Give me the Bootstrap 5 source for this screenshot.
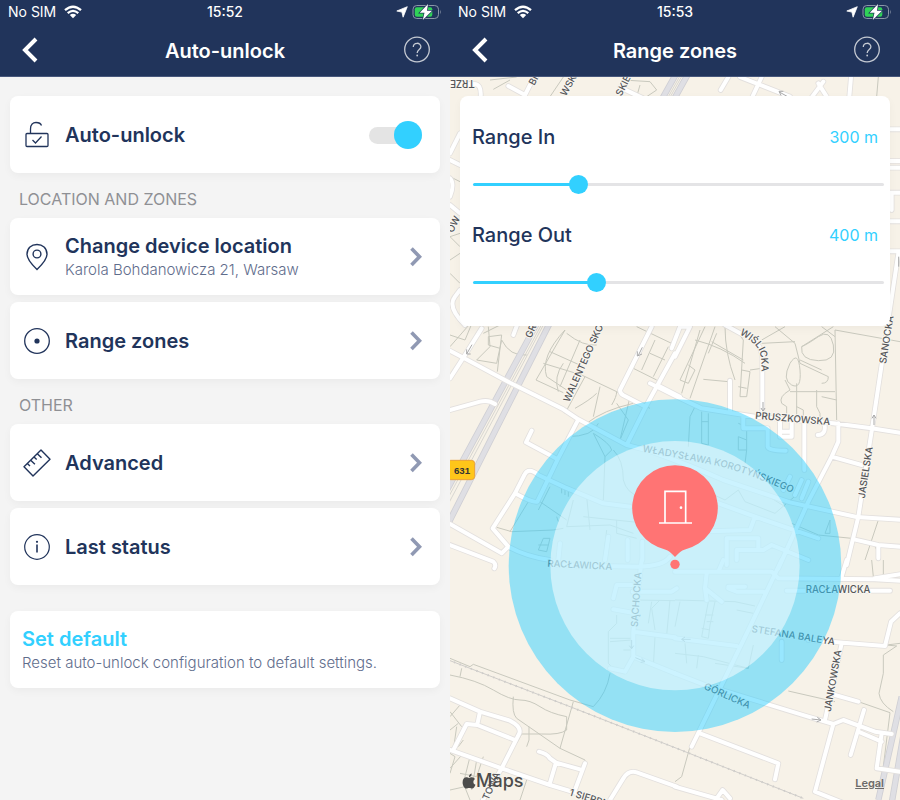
<!DOCTYPE html>
<html lang="en">
<head>
<meta charset="utf-8">
<meta name="viewport" content="width=device-width, initial-scale=1">
<title>Auto-unlock</title>
<link href="https://cdn.jsdelivr.net/npm/bootstrap@5.3.0/dist/css/bootstrap.min.css" rel="stylesheet">
<style>
  :root { --navy: #21345b; --sky: #32d0ff; }
  body { font-family: Inter, "Liberation Sans", sans-serif; background: #f4f4f4; color: var(--navy); }
  .app-bar { background: var(--navy); border-bottom: 1px solid #47577c; }
  .status { height: 24px; font-size: 14px; line-height: 24px; padding: 0 8px; }
  .status > * { flex: 1 1 0; }
  .status time { font-weight: 500; }
  .title-bar { height: 52px; padding: 0 19px; }
  .title-bar h1 { font-size: 20px; line-height: 24px; font-weight: 600; padding-top: 1px; }
  .bar-btn { width: 28px; line-height: 0; }
  .panel { border: 0; border-radius: 8px; box-shadow: 0 3px 8px rgba(0, 0, 0, .04); color: var(--navy); }
  .screen { padding: 19px 10px; }
  .setting { min-height: 77px; gap: 14px; padding: 0 18px 0 13px; }
  .setting-name { font-size: 20px; line-height: 24px; font-weight: 600; }
  .setting-note { font-size: 15px; line-height: 24px; font-weight: 300; color: #5f6d8c; }
  .two-line { padding-top: 3px; }
  .group-name { height: 45px; font-size: 16px; line-height: 53px; font-weight: 400; color: #8f9094; padding-left: 9px; }
  .stack { gap: 7px; }
  .reset { margin-top: 26px; min-height: 77px; padding: 3px 12px 0; }
  .reset .setting-name { color: var(--sky); }
  .toggle { appearance: none; width: 53px; height: 28px; position: relative; }
  .toggle::before { content: ""; position: absolute; inset: 6px 0 5px; border-radius: 9px; background: #e4e4e4; }
  .toggle::after { content: ""; position: absolute; left: 0; top: 0; width: 28px; height: 28px; border-radius: 50%; background: #bbb; }
  .toggle:checked::after { left: auto; right: 0; background: var(--sky); }
  .map-screen { background: #f7f2e8; }
  .city-map { position: absolute; inset: 0; width: 100%; height: 100%; }
  .ranges { min-height: 230px; padding: 27px 6px 0 12px; }
  .range-name { font-size: 20px; line-height: 28px; font-weight: 500; }
  .range-value { font-size: 16px; line-height: 28px; color: var(--sky); padding-right: 6px; }
  .slider { appearance: none; display: block; width: 100%; height: 20px; margin: 23px 0 27px; padding: 0 0 0 1px; background: none; }
  .slider::-webkit-slider-runnable-track { height: 3px; border-radius: 2px; background: linear-gradient(to right, var(--sky) var(--fill), #e4e4e6 var(--fill)); }
  .slider::-webkit-slider-thumb { appearance: none; width: 19px; height: 19px; margin-top: -8px; border-radius: 50%; background: var(--sky); }
  .maps-brand { font-size: 18px; line-height: 24px; font-weight: 500; color: #4c4c4b; }
  .legal { font-size: 11px; line-height: 16px; font-weight: 600; color: #6d6c6a; padding-top: 4px; }
  .map-foot { padding: 0 16px 7px 12px; }
</style>
<script src="https://cdn.jsdelivr.net/npm/bootstrap@5.3.0/dist/js/bootstrap.bundle.min.js"></script>
</head>
<body>
<svg class="d-none" aria-hidden="true">
  <symbol id="wifi" viewBox="0 0 18 14"><g fill="none" stroke="#fff" stroke-width="2.3"><path d="M1 5.2Q9-1.8 17 5.2M3.7 8.2Q9 3.6 14.3 8.2"/></g><path d="M5.8 10Q9 7.4 12.2 10L9 13.3z" fill="#fff"/></symbol>
  <symbol id="arrow" viewBox="0 0 12 12"><path d="M11.3.7 7.1 11.2 5.9 6.1.8 5z" fill="#fff" stroke="#fff" stroke-width=".8" stroke-linejoin="round"/></symbol>
  <symbol id="battery" viewBox="0 0 30 16"><rect x="1" y="1.5" width="25.5" height="13" rx="3.8" fill="none" stroke="#8c95a9"/><path d="M28 5.5Q29.5 8 28 10.5z" fill="#8c95a9"/><rect x="2.8" y="3.3" width="17.5" height="9.4" rx="2" fill="#30d158"/><path d="M16 0 7.7 8.8h4.8L10.8 16 20 6.8h-5z" fill="#fff" stroke="#21345b" stroke-width="1.4" paint-order="stroke"/></symbol>
  <symbol id="back" viewBox="0 0 28 28"><path d="M17 3 6 14 17 25" fill="none" stroke="#fff" stroke-width="4"/></symbol>
  <symbol id="help" viewBox="0 0 28 28"><circle cx="14" cy="13.500" r="12.300" fill="none" stroke="#c5cad3" stroke-width="1.300"/><path d="M10.300 11.100C10.300 6 17.900 6.100 17.900 10.800C17.900 13.700 14.200 13.500 14.200 17.100" fill="none" stroke="#c5cad3" stroke-width="1.300"/><circle cx="14.200" cy="19.500" r=".9" fill="#c5cad3"/></symbol>
  <symbol id="next" viewBox="0 0 12 20"><path d="M1.500 1.500 9.500 9.700 1.500 18" fill="none" stroke="#9099b3" stroke-width="3.600"/></symbol>
</svg>

<main class="row g-0 min-vh-100">
  <section class="col-6 d-flex flex-column">
    <header class="app-bar text-white">
      <div class="status d-flex align-items-center">
        <div class="d-flex align-items-center gap-2"><span>No SIM</span><svg width="18" height="14"><use href="#wifi"/></svg></div>
        <time class="text-center">15:52</time>
        <div class="d-flex justify-content-end align-items-center gap-1"><svg width="12" height="12"><use href="#arrow"/></svg><svg width="30" height="16"><use href="#battery"/></svg></div>
      </div>
      <nav class="title-bar d-flex justify-content-between align-items-center">
        <button class="bar-btn btn p-0 border-0" aria-label="Back"><svg width="28" height="28"><use href="#back"/></svg></button>
        <h1 class="mb-0">Auto-unlock</h1>
        <button class="bar-btn btn p-0 border-0" aria-label="Help"><svg width="28" height="28"><use href="#help"/></svg></button>
      </nav>
    </header>
    <div class="screen">
      <div class="panel card setting flex-row align-items-center">
        <svg width="28" height="28" fill="none" stroke="#21345b" stroke-width="1.300"><rect x="3" y="12.500" width="22" height="13" rx="1"/><path d="M7.500 12.500V8C7.500 3.500 10 1.500 13 1.500Q17.500 1.500 18.500 4.500M9.500 19 12.500 22 18.500 15.500"/></svg>
        <label class="setting-name flex-grow-1" for="auto">Auto-unlock</label>
        <input class="toggle" type="checkbox" role="switch" id="auto" checked>
      </div>
      <h2 class="group-name mb-0">LOCATION AND ZONES</h2>
      <div class="stack d-flex flex-column">
        <a href="#location" class="panel card setting flex-row align-items-center text-decoration-none">
          <svg width="28" height="28" fill="none" stroke="#21345b" stroke-width="1.400"><path d="M14 26.500Q4 17 4 11.300C4 5 8.500 1.500 14 1.500S24 5 24 11.300Q24 17 14 26.500z"/><circle cx="14" cy="11" r="3.900"/></svg>
          <span class="two-line flex-grow-1"><span class="setting-name d-block">Change device location</span><span class="setting-note d-block">Karola Bohdanowicza 21, Warsaw</span></span>
          <svg width="12" height="20"><use href="#next"/></svg>
        </a>
        <a href="#zones" class="panel card setting flex-row align-items-center text-decoration-none">
          <svg width="28" height="28"><circle cx="14" cy="14" r="12.300" fill="none" stroke="#21345b" stroke-width="1.300"/><circle cx="14" cy="14" r="2.600" fill="#21345b"/></svg>
          <span class="setting-name flex-grow-1">Range zones</span>
          <svg width="12" height="20"><use href="#next"/></svg>
        </a>
      </div>
      <h2 class="group-name mb-0">OTHER</h2>
      <div class="stack d-flex flex-column">
        <a href="#advanced" class="panel card setting flex-row align-items-center text-decoration-none">
          <svg width="28" height="28" fill="none" stroke="#21345b" stroke-width="1.400" stroke-linejoin="round"><path d="M18 1 27 10.300 10 27 1 17.700zM4.300 14.400 7 16.900M7.700 11.200 11.900 15.300M11 8 13.700 10.600M14.300 4.700 18.500 8.800"/></svg>
          <span class="setting-name flex-grow-1">Advanced</span>
          <svg width="12" height="20"><use href="#next"/></svg>
        </a>
        <a href="#status" class="panel card setting flex-row align-items-center text-decoration-none">
          <svg width="28" height="28"><circle cx="14" cy="14" r="12.300" fill="none" stroke="#21345b" stroke-width="1.200"/><path d="M14 11.500V19.500" stroke="#21345b" stroke-width="1.600"/><circle cx="14" cy="8.800" r="1.100" fill="#21345b"/></svg>
          <span class="setting-name flex-grow-1">Last status</span>
          <svg width="12" height="20"><use href="#next"/></svg>
        </a>
      </div>
      <button class="panel card reset w-100 justify-content-center text-start bg-white">
        <span class="setting-name">Set default</span>
        <span class="setting-note">Reset auto-unlock configuration to default settings.</span>
      </button>
    </div>
  </section>

  <section class="col-6 d-flex flex-column">
    <header class="app-bar text-white">
      <div class="status d-flex align-items-center">
        <div class="d-flex align-items-center gap-2"><span>No SIM</span><svg width="18" height="14"><use href="#wifi"/></svg></div>
        <time class="text-center">15:53</time>
        <div class="d-flex justify-content-end align-items-center gap-1"><svg width="12" height="12"><use href="#arrow"/></svg><svg width="30" height="16"><use href="#battery"/></svg></div>
      </div>
      <nav class="title-bar d-flex justify-content-between align-items-center">
        <button class="bar-btn btn p-0 border-0" aria-label="Back"><svg width="28" height="28"><use href="#back"/></svg></button>
        <h1 class="mb-0">Range zones</h1>
        <button class="bar-btn btn p-0 border-0" aria-label="Help"><svg width="28" height="28"><use href="#help"/></svg></button>
      </nav>
    </header>
    <div class="map-screen position-relative flex-grow-1 d-flex flex-column justify-content-between overflow-hidden">
      <svg class="city-map" viewBox="0 231 1350 2169" preserveAspectRatio="xMidYMid slice" role="img" aria-label="Map of Warsaw with range zones">
        <defs>
          <g id="streets">
            <!-- north -->
            <path d="M0 252H70Q95 250 92 290M175 258 225 285 240 255 258 231M510 262 580 295M835 231 812 270M935 231 905 295M870 231 1020 290M1120 245 1085 292M1105 250 1130 290M1203 231 1198 290M1320 388H1350M1320 483H1350M1320 503H1350M1320 578H1350M1325 578V630M1320 664H1350M1320 754H1350M1345 760 1315 960M30 400 0 460M0 480 30 495M0 535Q15 550 0 590M0 615 30 640M45 975Q-10 920 15 890L30 870"/>
            <!-- middle west -->
            <g transform="translate(0 960)"><path d="M-5 90 40 113 180 188 340 268 385 298 530 375 600 393Q730 440 820 480L1020 547 1220 591 1350 599M40 113 95 25M0 175 40 113M0 270 90 245Q115 238 135 252M190 45 205 5M605 20 510 210Q510 220 520 226L587 260M675 100 587 260 530 375M627 198 690 230M245 332 228 367 323 418M385 298 323 418 262 545Q250 550 195 520M540 560 460 550 345 502 265 465Q235 440 223 465L195 520 128 625 175 680 155 700 0 612M0 675 130 725Q140 735 133 745M175 680Q230 710 300 720M475 650 465 720M533 660V720M577 665V720M330 670 325 720"/></g>
            <!-- middle east -->
            <g transform="translate(675 960)"><path d="M-10 85 15 20 45 20 0 110M-75 190-5 225 80 265 240 290 475 310 590 325 675 338M150 15 205 45Q255 60 262 110V280M165 182V275M205 285V325H278V380Q280 392 332 392M315 305V350H350V305M315 335H350M388 310V450M448 310Q455 345 428 345M490 310V365L470 410 400 545 310 745M470 410 560 435M640 0 592 320 550 590 515 735M537 658 610 675 675 680M610 675V715M345 470 325 510M380 480 360 525M400 485 380 535M-20 495 240 590 430 655M240 590 225 630 60 635M155 735V655H250V690H185V720M185 690H265L290 675 400 720"/></g>
            <!-- south west -->
            <g transform="translate(0 1680)"><path d="M0 415 90 455 180 482Q215 500 208 520L155 625 90 735M90 455 82 493M195 540 82 495 50 492 10 570M-5 568 155 625 300 675 400 705 500 745M267 575Q290 580 300 595L318 608 390 628M318 608 298 675M405 610 375 690M480 720 520 655Q535 630 560 637L680 680M300 15 560 20Q640 20 660-10M490 115 500 75H545M548 95H665L680 85M490 148 555 160M575 0 550 215V290L525 335 480 325M550 215 675 232M550 290 675 340"/></g>
            <!-- south east -->
            <g transform="translate(675 1680)"><path d="M515 0 500 50M320 0 225 200 50 560M0 35H290L310 55 600 58 675 62M600 55 675 43M335 92H645M95 40 90 85 95 120M90 85 140 125M160 80H210M160 85 185 95H265M130 35 145 0M0 235 185 258M0 340 90 375 400 470 475 492 505 480 600 515 650 522M400 240 630 258 648 185 675 160M500 250 450 480M320 245V300M480 405 550 425M475 492 420 695 520 735M75 520 310 610 300 658M567 450 527 585M550 515 620 545M620 520 605 625 675 635M0 680 140 720M125 715 143 690 165 715"/></g>
          </g>
          <g id="paths">
            <path d="M120 240 200 231M130 268 180 240M300 290 340 231M520 240 600 245 620 270 590 290M570 255 560 290M1285 231 1280 290M0 530 30 545M30 700 0 710 30 740M0 820 30 850M0 780 30 760"/>
            <g transform="translate(0 960)"><path d="M70 0 45 60 0 45M0 80 70 0M115 50 155 45 150 85 115 75zM115 20 120 80 80 120M80 120 140 130 155 60Q180 110 230 105M100 40 160 10M142 155 150 85M345 30Q270 110 290 170L350 210M345 30 258 180 340 218M280 130 395 165 500 215 600 265M300 95 400 140M340 130Q310 170 325 215M390 60 330 200M350 40Q400 80 440 75M405 170 345 280M450 200 430 290M375 265Q420 240 440 220M485 255Q500 230 500 215M340 268 410 310Q460 270 550 250M350 350Q430 350 445 310M430 340 465 410 460 540M500 250 535 300 510 360M430 340Q480 370 485 390L465 410M490 390Q520 420 520 480 530 520 570 530M540 230 510 360M585 65 550 145 620 180M615 60 575 150M655 80 610 170M560 20 675 75M600 100 645 120M300 500 265 570M270 545 350 600M335 500V520M345 505V525M355 508V530M235 545 180 635M140 622 185 635 310 630 340 625M320 590 325 605M280 655 265 690 290 695 300 655zM265 675H295M370 540 350 620 480 615 550 640M410 530 420 630M470 630 460 720M400 590 590 610M500 600V640L560 655"/></g>
            <g transform="translate(675 960)"><path d="M120 20 45 235M90 20 15 180M75 30 20 220M40 135 60 150 40 190 15 180M85 178 160 185M125 40 100 100M150 20Q150 100 180 180M110 65 205 120M175 20 205 60 195 230H215L225 155 200 150M190 200 215 205M225 150 260 145M60 60Q140 80 210 130M260 70 360 65M260 60 330 20M300 20 360 70 375 130M475 20 380 80Q375 120 430 122T475 75 430 50 380 80M345 130Q320 180 350 195T375 150 345 130M375 130 460 170Q460 190 440 190M375 120 440 150M330 180 345 210Q310 230 320 250L335 260V300M365 190V310M345 215H480M425 210V260L435 280V310M365 260 385 270 385 320M480 30 485 300M440 20 480 50M480 30 675 65M440 230 485 240M60 260 45 290 40 380M80 275V370L100 375V280M80 305H100M190 310 215 320V390H190V350L215 360M215 390 210 430M350 610 430 645 530 655M465 600 450 640 465 640zM610 600 570 720M600 680 610 700M0 470 150 540 190 510 210 545 300 580 370 520M250 510 330 560"/></g>
            <g transform="translate(0 1680)"><path d="M0 295 60 320 70 313 360 420 430 440Q470 400 480 340M0 345Q80 360 130 390T210 420 270 440 350 470V510Q330 525 275 522H215L200 550M190 410Q185 460 200 475L330 565 405 600V620M370 425 330 565M237 500V540L230 560M35 325 30 350M0 455 35 500M0 470 30 435M0 510 25 490M20 500 10 570M40 540 25 560M0 580 15 590 0 640M40 580 0 625M60 590 40 670 60 720M80 600 65 690M0 690 45 680M30 640 80 650M230 660 210 720M100 590 80 650M555 120 675 122M605 125 595 190M660 120 650 225M615 230 610 320M500 165V190L475 215V310L490 325M480 235H550M480 245 545 240M520 270H545M630 120 605 145 615 210"/></g>
            <g transform="translate(675 1680)"><path d="M0 120 180 125 240 138M15 125 0 200M100 125 80 230 100 235 105 195 120 125M90 165H115M95 185H115M80 205 105 210M185 150 235 160M235 255 220 325 120 310M0 280 85 290 220 325M30 250 35 310M70 285 65 325M340 393 480 425M550 425 645 458 620 660M675 250 635 255 665 258 625 285V340L612 400Q615 430 655 455M590 0 595 50M625 0V50M45 560 20 650 0 665"/></g>
          </g>
          <path id="highways" d="M682 215 266 960 -20 1490M718 215 304 960 -10 1580M1355 2090 1285 2400M1375 2120 1325 2410"/>
        </defs>
        <use href="#paths" fill="none" stroke="#c9c9be" stroke-width="3"/>
        <path id="rail" d="M-5 1980 360 2120 680 2245 1060 2395" fill="none" stroke="#cfcdca" stroke-width="3"/>
        <path d="M-5 1980 360 2120 680 2245 1060 2395" fill="none" stroke="#cfcdca" stroke-width="6" stroke-dasharray="4 14"/>
        <use href="#highways" fill="none" stroke="#cfcfd4" stroke-width="19"/>
        <use href="#highways" fill="none" stroke="#dfdfe4" stroke-width="14"/>
        <path d="M697 215 282 960 -20 1520M703 215 288 960 -20 1540" fill="none" stroke="#c9c8c5" stroke-width="2"/>
        <use href="#streets" fill="none" stroke="#e3e0de" stroke-width="17" stroke-linejoin="round" stroke-linecap="round"/>
        <use href="#streets" fill="none" stroke="#fff" stroke-width="12" stroke-linejoin="round" stroke-linecap="round"/>
        <g fill="none" stroke="#aaa" stroke-width="3"><path d="M66 1034 50 1062M50 1048V1062H62M577 1042 564 1068M562 1054V1068L576 1062M939 1206V1232M933 1224 939 1234 945 1224M1272 1275V1245M1266 1255 1272 1245 1278 1255M1085 2157 1112 2160M1102 2152 1113 2160 1100 2166M1013 290 988 276M1000 274H987L993 286M1346 800V770M545 1920V1945M538 1937 545 1946 551 1937M556 1973 585 1985M575 1975 585 1985 572 1987M722 1918H695M705 1911 695 1918 705 1925"/></g>
        <g font-family="Inter, 'Liberation Sans', sans-serif" font-size="29" font-weight="500" fill="#55565a" stroke="#f9f6f0" stroke-width="6" paint-order="stroke" stroke-linejoin="round">
          <defs>
            <path id="wislicka" d="M868 1003Q922 1030 930 1060T933 1150"/>
            <path id="korot" d="M577 1355Q690 1375 790 1395T1080 1504"/>
          </defs>
          <text transform="translate(74 241) rotate(180)">TRZE</text>
          <text transform="translate(253 258) rotate(-62)">BI</text>
          <text transform="translate(347 290) rotate(-60)">WSK</text>
          <text transform="translate(514 290) rotate(-63)">SKIE</text>
          <text transform="translate(8 700) rotate(-63)">OW</text>
          <text transform="translate(243 1016) rotate(-65)">GR</text>
          <text transform="translate(358 1208) rotate(-66)">WALENTEGO SKO</text>
          <text><textPath href="#wislicka">WIŚLICKA</textPath></text>
          <text transform="translate(915 1256) rotate(5)">PRUSZKOWSKA</text>
          <text transform="translate(1308 1092) rotate(-81)">SANOCKA</text>
          <text transform="translate(1244 1496) rotate(-81)">JASIELSKA</text>
          <text><textPath href="#korot">WŁADYSŁAWA KOROTYŃSKIEGO</textPath></text>
          <text transform="translate(292 1700) rotate(3)">RACŁAWICKA</text>
          <text transform="translate(563 1882) rotate(-86)">SĄCHOCKA</text>
          <text x="1067" y="1779">RACŁAWICKA</text>
          <text transform="translate(904 1896) rotate(9)">STEFANA BALEYA</text>
          <text transform="translate(1142 2136) rotate(-80)">JANKOWSKA</text>
          <text transform="translate(760 2066) rotate(24)">GÓRLICKA</text>
          <text transform="translate(115 2402) rotate(-66)">TOWA</text>
          <text transform="translate(356 2386) rotate(17)">1 SIERPNIA</text>
        </g>
        <circle cx="675" cy="1697" r="499" fill="#32d0ff" fill-opacity=".5"/>
        <circle cx="675" cy="1697" r="374" fill="#fff" fill-opacity=".5"/>
        <rect x="-8" y="1381" width="82" height="58" rx="10" fill="#ffc61a" stroke="#e9a23a" stroke-width="3"/>
        <text x="36" y="1421" text-anchor="middle" font-family="'Liberation Sans', sans-serif" font-size="29" font-weight="700" fill="#333">631</text>
        <path d="M675 1396a128 128 0 0 1 28 253Q692 1652 675 1671 658 1652 647 1649A128 128 0 0 1 675 1396z" fill="#ff7474"/>
        <circle cx="675" cy="1693" r="14" fill="#ff7474"/>
        <path d="M627 1569H726M645 1569V1474H707V1569" fill="none" stroke="#fff" stroke-width="5"/>
        <circle cx="693" cy="1523" r="4" fill="#fff"/>
      </svg>
      <div class="screen position-relative">
        <div class="panel card ranges">
          <div class="d-flex justify-content-between"><label class="range-name" for="in">Range In</label><output class="range-value" for="in">300 m</output></div>
          <input class="slider" type="range" id="in" min="0" max="100" step="any" value="24.4" style="--fill:25%">
          <div class="d-flex justify-content-between"><label class="range-name" for="out">Range Out</label><output class="range-value" for="out">400 m</output></div>
          <input class="slider" type="range" id="out" min="0" max="100" step="any" value="29" style="--fill:30%">
        </div>
      </div>
      <footer class="map-foot position-relative d-flex justify-content-between align-items-center">
        <span class="maps-brand d-flex align-items-center"><svg width="14" height="16" viewBox="0 0 14 16" fill="#4c4c4b"><path d="M9.700.5Q9.800 3.500 6.900 4.200 6.900 1.400 9.700.5zM7 5C8 5 8.700 4.200 10 4.300Q12 4.400 13 6C10.500 7.500 10.900 10.800 13.500 11.800 12.600 14 11.500 15.600 10.200 15.600 9 15.600 8.600 14.900 7.200 14.900S5.400 15.600 4.300 15.600C2.200 15.600.6 12 .6 9.200.6 6 2.400 4.400 4.300 4.300 5.500 4.300 6.200 5 7 5z"/></svg>Maps</span>
        <a class="legal" href="#legal">Legal</a>
      </footer>
    </div>
  </section>
</main>
</body>
</html>
